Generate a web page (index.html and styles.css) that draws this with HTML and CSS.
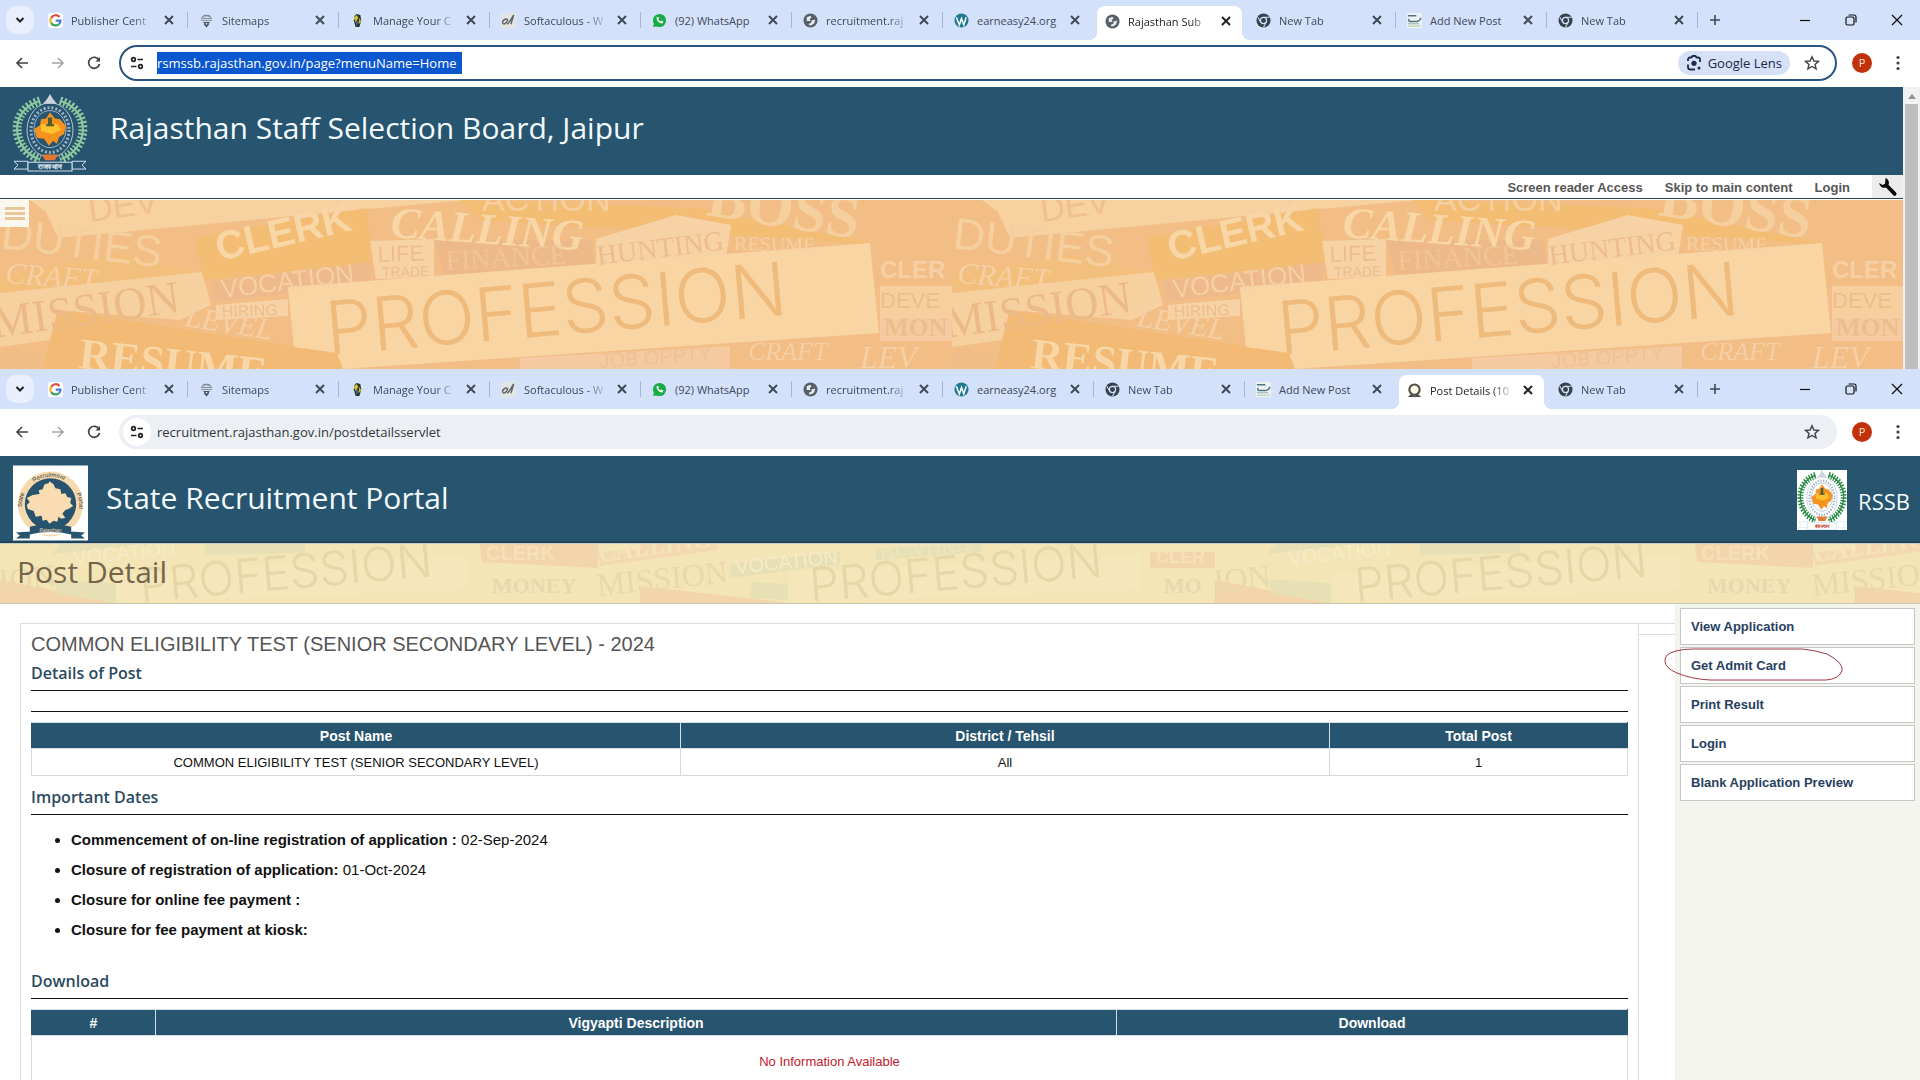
FILE: index.html
```html
<!DOCTYPE html>
<html lang="en">
<head>
  <meta charset="UTF-8" />
  <meta name="viewport" content="width=device-width, initial-scale=1" />
  <title>Rajasthan Staff Selection Board</title>
  <link rel="stylesheet" href="styles.css">
</head>
<body>
  <!-- Shared icons -->
  <svg class="defs" width="0" height="0" aria-hidden="true">
    <defs>
      <symbol id="i-x" viewBox="0 0 16 16"><path d="M4 4l8 8M12 4l-8 8" stroke="currentColor" stroke-width="2" fill="none"/></symbol>
      <symbol id="i-down" viewBox="0 0 16 16"><path d="M4.500 6l3.500 3.500L11.500 6" stroke="currentColor" stroke-width="2" fill="none"/></symbol>
      <symbol id="i-plus" viewBox="0 0 16 16"><path d="M8 3v10M3 8h10" stroke="currentColor" stroke-width="1.600" fill="none"/></symbol>
      <symbol id="i-min" viewBox="0 0 16 16"><path d="M3 8.500h10" stroke="currentColor" stroke-width="1.200" fill="none"/></symbol>
      <symbol id="i-restore" viewBox="0 0 16 16"><rect x="3" y="5" width="8" height="8" rx="1.500" fill="none" stroke="currentColor" stroke-width="1.200"/><path d="M5.500 3h5.500a2 2 0 0 1 2 2v5.500" fill="none" stroke="currentColor" stroke-width="1.200"/></symbol>
      <symbol id="i-close" viewBox="0 0 16 16"><path d="M3 3l10 10M13 3L3 13" stroke="currentColor" stroke-width="1.300" fill="none"/></symbol>
      <symbol id="i-back" viewBox="0 0 16 16"><path d="M14 8H3M8 3L3 8l5 5" stroke="currentColor" stroke-width="1.600" fill="none"/></symbol>
      <symbol id="i-fwd" viewBox="0 0 16 16"><path d="M2 8h11M8 3l5 5-5 5" stroke="currentColor" stroke-width="1.600" fill="none"/></symbol>
      <symbol id="i-reload" viewBox="0 0 16 16"><path d="M13 5.200A5.500 5.500 0 1 0 13.500 9" stroke="currentColor" stroke-width="1.700" fill="none"/><path d="M14 2V6.500H9.500z" fill="currentColor"/></symbol>
      <symbol id="i-site" viewBox="0 0 16 16"><g stroke="currentColor" stroke-width="1.700" fill="none"><circle cx="4.500" cy="4.500" r="1.800"/><path d="M8.500 4.500H14M2 11.500h5.500"/><circle cx="11.500" cy="11.500" r="1.800"/></g></symbol>
      <symbol id="i-star" viewBox="0 0 16 16"><path d="M8 1.800l1.900 4.200 4.600.4-3.500 3 1.100 4.500L8 11.500l-4.100 2.400L5 9.400l-3.500-3 4.600-.4z" stroke="currentColor" stroke-width="1.400" fill="none"/></symbol>
      <symbol id="i-dots" viewBox="0 0 16 16"><g fill="currentColor"><circle cx="8" cy="2.500" r="1.600"/><circle cx="8" cy="8" r="1.600"/><circle cx="8" cy="13.500" r="1.600"/></g></symbol>
      <symbol id="i-lens" viewBox="0 0 16 16"><path d="M2 6V4.500A2 2 0 0 1 4 2.500h1.500L6.500 1h3l1 1.500H12a2 2 0 0 1 2 2V7M2 9.500V12a2.500 2.500 0 0 0 2.500 2.500H9" stroke="currentColor" stroke-width="1.800" fill="none"/><circle cx="8" cy="8.300" r="2.600" fill="currentColor"/><circle cx="13" cy="13" r="1.500" fill="currentColor"/></symbol>
      <symbol id="i-wrench" viewBox="0 0 20 20"><path d="M7.500 1a5 5 0 0 1 3 6.800l7.500 7.700a1.900 1.900 0 0 1-2.700 2.700L8 10.500A5 5 0 0 1 1.200 6L4.500 8 7 6.800 7.300 4z" fill="#0a0a0a"/></symbol>

      <!-- Favicons -->
      <symbol id="f-google" viewBox="0 0 16 16"><rect width="16" height="16" rx="3" fill="#fff"/><g fill="none" stroke-width="2.400"><path d="M12.200 4.200A5.300 5.300 0 0 0 3.500 5.200" stroke="#e0483a"/><path d="M3.500 5.200a5.300 5.300 0 0 0 0 5.600" stroke="#f0b429"/><path d="M3.500 10.800a5.300 5.300 0 0 0 8 1.200" stroke="#36a456"/><path d="M11.500 12A5.300 5.300 0 0 0 13.300 8.200H8.200" stroke="#4a7fe0"/></g></symbol>
      <symbol id="f-sitemap" viewBox="0 0 16 16"><path d="M2.500 6C3 2 13 2 13.500 6zM5 4.500V2.500h6v2" fill="#d6dee6" stroke="#74808c"/><path d="M2 8h12M4 10h8" stroke="#8a96a0"/><path d="M5.500 9.500h5v3l-2.500 3-2.500-3z" fill="#3f4d5b"/><circle cx="8" cy="11.500" r="1" fill="#d3e1fb"/></symbol>
      <symbol id="f-manage" viewBox="0 0 16 16"><path d="M7 1l4 1 1 6-2 7H6L4 8l1-5z" fill="#28332d"/><path d="M4 5l3-3 2 3-3 5zM10 5l2 4-3 3z" fill="#d4bd37"/><path d="M6 8l3 1-2 5z" fill="#3d7387"/></symbol>
      <symbol id="f-soft" viewBox="0 0 16 16"><rect width="16" height="16" fill="#e3e5e2"/><path d="M1.500 10c2-5 7-4 5-1s-4 4-5 1M6.500 12c3-2 4-5 7-10-1 4-2 7-3 10" stroke="#5f6668" stroke-width="1.600" fill="none"/></symbol>
      <symbol id="f-wa" viewBox="0 0 16 16"><circle cx="8" cy="8" r="7" fill="#18ac45"/><path d="M1 15l1.500-5L6 14z" fill="#18ac45"/><path d="M5 4.500c-1 3 3.500 7.500 6.500 6.500l.5-2-2-1-1 1L6.500 7l1-1-1-2z" fill="#fff"/></symbol>
      <symbol id="f-globe" viewBox="0 0 16 16"><circle cx="8" cy="8" r="7.500" fill="#566067"/><path d="M4 4.500L8 3l1 2-2 1.500 1 2H4zM9 8l4-1-1 4-3 2H6l1-2 2-.5z" fill="#e6ebee"/></symbol>
      <symbol id="f-wp" viewBox="0 0 16 16"><circle cx="8" cy="8" r="7.500" fill="#1f7a90"/><path d="M2.500 4.500l3.200 8.300L8 6l2.500 6.800L13 4.500" stroke="#fff" stroke-width="1.600" fill="none"/></symbol>
      <symbol id="f-chrome" viewBox="0 0 16 16"><circle cx="8" cy="8" r="7.500" fill="#36424c"/><circle cx="8" cy="8" r="3.300" fill="none" stroke="#d3e1fb" stroke-width="1.300"/><path d="M8 4.500h6.500M5 10L2 4.500M10.800 10L8 15.300" stroke="#d3e1fb" stroke-width="1.100"/></symbol>
      <symbol id="f-addpost" viewBox="0 0 16 16"><rect width="16" height="16" fill="#eef3f2"/><path d="M1 3h9M2 9h9q3-1 4-4M2 6v3" stroke="#4c7380" stroke-width="1.500" fill="none"/><path d="M1 11.500h12" stroke="#8fa9ae"/><path d="M1 14h14" stroke="#a7c8a7"/></symbol>
      <symbol id="f-post" viewBox="0 0 16 16"><circle cx="8" cy="7" r="5.500" fill="#fffbe8" stroke="#4c5044" stroke-width="2.200"/><path d="M1 15l3-3 4 1.500 4-1.500 3 3z" fill="#4c5044"/></symbol>

      <!-- Board emblem -->
      <symbol id="emblem" viewBox="0 0 76 80" preserveAspectRatio="none">
        <g fill="none" stroke="currentColor">
          <path d="M28 7C-5 17 0 58 28 67M48 7c33 10 28 51 0 60" stroke-width="9" stroke-dasharray="2 2"/>
          <path d="M28 7C-5 17 0 58 28 67M48 7c33 10 28 51 0 60" stroke-width="2"/>
        </g>
        <ellipse cx="38" cy="37" rx="23" ry="28" fill="var(--ring)" stroke="#b9c9d9" stroke-width="1"/>
        <ellipse cx="38" cy="37" rx="19" ry="23" fill="none" stroke="#9fb2c6" stroke-width="3" stroke-dasharray="2 2"/>
        <ellipse cx="38" cy="36" rx="16" ry="19" fill="var(--disc)" stroke="#9fb2c6"/>
        <path d="M38 19l5 6 5 1 6 7-2 8-5 3-2 7-4-3-4 5-5-7-7-1-3-9 6-4 1-6 5-1z" fill="#f6921e"/>
        <path d="M29 31h17l3 6-9 4-11-3z" fill="#fbc22d"/>
        <path d="M36 24h4v7h-4zM34 31h8v2h-8z" fill="#4f5c33"/>
        <path d="M38 0l3 5 4 5H31l4-5z" fill="#cdd3dc"/>
        <path d="M30 62h16l-3 6H33z" fill="#e07836"/>
        <path d="M2 69h14v8H2l4-4zM74 69H60v8h14l-4-4z" fill="var(--disc)" stroke="#d3e2f4"/>
        <rect x="16" y="70" width="44" height="9" fill="var(--disc)" stroke="#d3e2f4"/>
        <text x="38" y="77" text-anchor="middle" font-size="7" font-weight="bold" fill="var(--ribbon)">राजस्थान</text>
      </symbol>

      <!-- Word collage, large -->
      <pattern id="words" width="952" height="169" patternUnits="userSpaceOnUse">
        <rect width="952" height="169" fill="#f2be86"/>
        <path d="M30 0H465L58 38 46 12z" fill="#f7d1a0"/>
        <path d="M0 75l120-20 80 17-200 34z" fill="#f3bf7c"/>
        <path d="M196 37L367 8l6 55-171 17zM480 20L880 45 700 8 460 0z" fill="#f3bd74"/>
        <path d="M0 93l202-21 9 33-31 15-122-10-8 30-50 7z" fill="#f7d0a0"/>
        <path d="M58 110l279 43 6 16H43z" fill="#f2ba74"/>
        <path d="M211 82l160-20v22l-158 18z" fill="#efba8b"/>
        <path d="M216 105l72-6v17l-72 4zM370 41l64-2v38l-58 2zM596 39l80-24 55 10-5 33-130 16z" fill="#f7d2a5"/>
        <path d="M434 39l158 2 4 34-152 4z" fill="#eeb989"/>
        <path d="M288 87L870 43l9 90-536 36-6-16-43-6z" fill="#f8d5a3"/>
        <path d="M880 86h72v32h-72z" fill="#f7cf9e"/>
        <path d="M880 118h72v23h-72zM520 158l210-12v23H520z" fill="#f5caa0"/>
        <g font-family="Liberation Sans">
          <text transform="translate(90 22) rotate(-8)" font-size="34" fill="#f0c08e">DEV</text>
          <text transform="translate(0 48) rotate(7)" font-size="44" fill="#f6cf9f">DUTIES</text>
          <text transform="translate(219 61) rotate(-13)" font-size="40" font-weight="bold" fill="#f8d6a5">CLERK</text>
          <text transform="translate(222 98) rotate(-7)" font-size="26" fill="#f6d0a4">VOCATION</text>
          <text x="482" y="11" font-size="34" fill="#f6cf9f">ACTION</text>
          <text transform="translate(222 117) rotate(-2)" font-size="16" fill="#edbd8c">HIRING</text>
          <text transform="translate(378 62) rotate(-2)" font-size="22" fill="#edbd8c">LIFE</text>
          <text transform="translate(382 77) rotate(-1)" font-size="14" fill="#edbd8c">TRADE</text>
          <text x="880" y="78" font-size="24" font-weight="bold" fill="#f6d0a4">CLER</text>
          <text x="880" y="108" font-size="22" fill="#edbd8c">DEVE</text>
          <text x="0" y="166" font-size="20" fill="#edbd8c">RAD</text>
          <text transform="translate(600 168) rotate(-4)" font-size="20" fill="#efc294">JOB OPPTY</text>
        </g>
        <g font-family="Liberation Serif">
          <text transform="translate(390 37) rotate(4)" font-size="44" font-style="italic" font-weight="bold" fill="#f8d6a5">CALLING</text>
          <text transform="translate(705 15) rotate(9)" font-size="60" font-weight="bold" fill="#f6cf9f">BOSS</text>
          <text transform="translate(598 65) rotate(-7)" font-size="28" fill="#edbd8c">HUNTING</text>
          <text transform="translate(734 50) rotate(1)" font-size="20" fill="#f6d0a4">RESUME</text>
          <text transform="translate(446 70) rotate(-3)" font-size="28" fill="#f1c496">FINANCE</text>
          <text transform="translate(5 83) rotate(4)" font-size="30" font-style="italic" fill="#f6d0a4">CRAFT</text>
          <text transform="translate(-6 138) rotate(-8)" font-size="46" fill="#ecba86">MISSION</text>
          <text transform="translate(184 126) rotate(9)" font-size="30" font-style="italic" fill="#f6d0a4">LEVEL</text>
          <text transform="translate(78 168) rotate(6)" font-size="44" font-weight="bold" fill="#f8d6a5">RESUME</text>
          <text x="884" y="136" font-size="26" font-weight="bold" fill="#edbd8c">MON</text>
          <text x="748" y="160" font-size="26" font-style="italic" fill="#f6d0a4">CRAFT</text>
          <text x="860" y="168" font-size="32" font-style="italic" fill="#f6d0a4">LEV</text>
        </g>
        <text transform="translate(328 155) rotate(-5)" font-family="Inter" font-weight="300" font-size="74" fill="#efbb7c">PROFESSION</text>
      </pattern>

      <!-- Word collage, page title strip -->
      <pattern id="words-soft" width="1215" height="59" patternUnits="userSpaceOnUse">
        <rect width="1215" height="59" fill="#f4e5b6"/>
        <path d="M0 36l120 23H0zM480 0h118v24l-116-6zM640 42l150 17H640zM1150 8h65v16h-65z" fill="#f3d5ac"/>
        <path d="M52 10l110-10H60zM50 35l66 4v20L60 50zM205 0h100v9l-100 2zM730 20l110-12v12l-110 14zM876 4l106-4v8l-106 8zM752 38l36 2v16l-38-2z" fill="#e8e0b5"/>
        <path d="M598 8l120-8v6l-118 16zM640 0h72l-70 10z" fill="#f4d9b0"/>
        <path d="M116 30l350-20v36l-350 13zM790 28l350-18v36l-350 13z" fill="#f5e7b9"/>
        <g font-family="Liberation Sans">
          <text transform="translate(74 21) rotate(-6)" font-size="20" fill="#f6ebc6">VOCATION</text>
          <text transform="translate(736 30) rotate(-6)" font-size="20" fill="#f6ebc6">VOCATION</text>
          <text x="486" y="16" font-size="20" font-weight="bold" fill="#f6e0b8">CLERK</text>
          <text x="1156" y="19" font-size="18" font-weight="bold" fill="#f6e0b8">CLER</text>
        </g>
        <g font-family="Inter" font-weight="300" font-size="47" fill="#e6d7a9">
          <text transform="translate(141 58) rotate(-5)">PROFESSION</text>
          <text transform="translate(811 58) rotate(-5)">PROFESSION</text>
        </g>
        <g font-family="Liberation Serif">
          <text transform="translate(600 18) rotate(-8)" font-size="26" font-style="italic" font-weight="bold" fill="#f6e4bc">CALLING</text>
          <text x="492" y="49" font-size="22" font-weight="bold" fill="#e6d9ad">MONEY</text>
          <text transform="translate(598 52) rotate(-6)" font-size="32" fill="#e9d8aa">MISSION</text>
          <text transform="translate(880 14) rotate(-3)" font-size="20" fill="#efe5bd">HUNTING</text>
          <text transform="translate(0 48) rotate(-6)" font-size="32" fill="#e9d8aa">ION</text>
          <text x="1164" y="49" font-size="22" font-weight="bold" fill="#e6d9ad">MO</text>
        </g>
      </pattern>
    </defs>
  </svg>

  <!-- Recruitment board home -->
  <section class="window window-top">
    <div class="tabs">
      <button class="tab-search" aria-label="Search tabs"><svg><use href="#i-down"/></svg></button>
      <div class="tab"><svg><use href="#f-google"/></svg><span>Publisher Cent</span><button aria-label="Close tab"><svg><use href="#i-x"/></svg></button></div>
      <div class="tab"><svg><use href="#f-sitemap"/></svg><span>Sitemaps</span><button aria-label="Close tab"><svg><use href="#i-x"/></svg></button></div>
      <div class="tab"><svg><use href="#f-manage"/></svg><span>Manage Your C</span><button aria-label="Close tab"><svg><use href="#i-x"/></svg></button></div>
      <div class="tab"><svg><use href="#f-soft"/></svg><span>Softaculous - W</span><button aria-label="Close tab"><svg><use href="#i-x"/></svg></button></div>
      <div class="tab"><svg><use href="#f-wa"/></svg><span class="fits">(92) WhatsApp</span><button aria-label="Close tab"><svg><use href="#i-x"/></svg></button></div>
      <div class="tab"><svg><use href="#f-globe"/></svg><span>recruitment.raj</span><button aria-label="Close tab"><svg><use href="#i-x"/></svg></button></div>
      <div class="tab before-active"><svg><use href="#f-wp"/></svg><span class="fits">earneasy24.org</span><button aria-label="Close tab"><svg><use href="#i-x"/></svg></button></div>
      <div class="tab active"><svg><use href="#f-globe"/></svg><span>Rajasthan Sub</span><button aria-label="Close tab"><svg><use href="#i-x"/></svg></button></div>
      <div class="tab"><svg><use href="#f-chrome"/></svg><span>New Tab</span><button aria-label="Close tab"><svg><use href="#i-x"/></svg></button></div>
      <div class="tab"><svg><use href="#f-addpost"/></svg><span class="fits">Add New Post</span><button aria-label="Close tab"><svg><use href="#i-x"/></svg></button></div>
      <div class="tab"><svg><use href="#f-chrome"/></svg><span>New Tab</span><button aria-label="Close tab"><svg><use href="#i-x"/></svg></button></div>
      <button class="new-tab" aria-label="New tab"><svg><use href="#i-plus"/></svg></button>
      <div class="controls">
        <button aria-label="Minimize"><svg><use href="#i-min"/></svg></button>
        <button aria-label="Restore"><svg><use href="#i-restore"/></svg></button>
        <button aria-label="Close"><svg><use href="#i-close"/></svg></button>
      </div>
    </div>
    <div class="toolbar">
      <button aria-label="Back"><svg><use href="#i-back"/></svg></button>
      <button class="off" aria-label="Forward"><svg><use href="#i-fwd"/></svg></button>
      <button aria-label="Reload"><svg><use href="#i-reload"/></svg></button>
      <div class="omnibox focused">
        <button class="site" aria-label="Site information"><svg><use href="#i-site"/></svg></button>
        <input class="url selected" type="text" aria-label="Address" value="rsmssb.rajasthan.gov.in/page?menuName=Home">
        <button class="lens"><svg><use href="#i-lens"/></svg>Google Lens</button>
        <button class="star" aria-label="Bookmark"><svg><use href="#i-star"/></svg></button>
      </div>
      <button class="avatar">P</button>
      <button aria-label="Menu"><svg><use href="#i-dots"/></svg></button>
    </div>

    <div class="view">
      <div class="site-page">
        <header class="site-header">
          <svg class="board-logo" role="img" aria-label="Board emblem"><use href="#emblem"/></svg>
          <h1>Rajasthan Staff Selection Board, Jaipur</h1>
        </header>
        <nav class="access">
          <a href="#">Screen reader Access</a>
          <a href="#">Skip to main content</a>
          <a href="#">Login</a>
          <button class="tools" aria-label="Tools"><svg><use href="#i-wrench"/></svg></button>
        </nav>
        <div class="hero">
          <svg class="hero-art" aria-hidden="true"><rect width="100%" height="100%" fill="url(#words)"/></svg>
          <button class="menu" aria-label="Menu"><i></i><i></i><i></i></button>
        </div>
      </div>
      <div class="scrollbar"><div class="arrow"></div><div class="thumb"></div></div>
    </div>
  </section>

  <!-- Recruitment portal -->
  <section class="window window-bottom">
    <div class="tabs">
      <button class="tab-search" aria-label="Search tabs"><svg><use href="#i-down"/></svg></button>
      <div class="tab"><svg><use href="#f-google"/></svg><span>Publisher Cent</span><button aria-label="Close tab"><svg><use href="#i-x"/></svg></button></div>
      <div class="tab"><svg><use href="#f-sitemap"/></svg><span>Sitemaps</span><button aria-label="Close tab"><svg><use href="#i-x"/></svg></button></div>
      <div class="tab"><svg><use href="#f-manage"/></svg><span>Manage Your C</span><button aria-label="Close tab"><svg><use href="#i-x"/></svg></button></div>
      <div class="tab"><svg><use href="#f-soft"/></svg><span>Softaculous - W</span><button aria-label="Close tab"><svg><use href="#i-x"/></svg></button></div>
      <div class="tab"><svg><use href="#f-wa"/></svg><span class="fits">(92) WhatsApp</span><button aria-label="Close tab"><svg><use href="#i-x"/></svg></button></div>
      <div class="tab"><svg><use href="#f-globe"/></svg><span>recruitment.raj</span><button aria-label="Close tab"><svg><use href="#i-x"/></svg></button></div>
      <div class="tab"><svg><use href="#f-wp"/></svg><span class="fits">earneasy24.org</span><button aria-label="Close tab"><svg><use href="#i-x"/></svg></button></div>
      <div class="tab"><svg><use href="#f-chrome"/></svg><span>New Tab</span><button aria-label="Close tab"><svg><use href="#i-x"/></svg></button></div>
      <div class="tab before-active"><svg><use href="#f-addpost"/></svg><span class="fits">Add New Post</span><button aria-label="Close tab"><svg><use href="#i-x"/></svg></button></div>
      <div class="tab active"><svg><use href="#f-post"/></svg><span>Post Details (10</span><button aria-label="Close tab"><svg><use href="#i-x"/></svg></button></div>
      <div class="tab"><svg><use href="#f-chrome"/></svg><span>New Tab</span><button aria-label="Close tab"><svg><use href="#i-x"/></svg></button></div>
      <button class="new-tab" aria-label="New tab"><svg><use href="#i-plus"/></svg></button>
      <div class="controls">
        <button aria-label="Minimize"><svg><use href="#i-min"/></svg></button>
        <button aria-label="Restore"><svg><use href="#i-restore"/></svg></button>
        <button aria-label="Close"><svg><use href="#i-close"/></svg></button>
      </div>
    </div>
    <div class="toolbar">
      <button aria-label="Back"><svg><use href="#i-back"/></svg></button>
      <button class="off" aria-label="Forward"><svg><use href="#i-fwd"/></svg></button>
      <button aria-label="Reload"><svg><use href="#i-reload"/></svg></button>
      <div class="omnibox">
        <button class="site" aria-label="Site information"><svg><use href="#i-site"/></svg></button>
        <input class="url" type="text" aria-label="Address" value="recruitment.rajasthan.gov.in/postdetailsservlet">
        <button class="star" aria-label="Bookmark"><svg><use href="#i-star"/></svg></button>
      </div>
      <button class="avatar">P</button>
      <button aria-label="Menu"><svg><use href="#i-dots"/></svg></button>
    </div>

    <header class="portal-header">
      <svg class="portal-logo" viewBox="0 0 76 76" role="img" aria-label="State Recruitment Portal">
        <rect width="76" height="76" fill="#fff"/>
        <circle cx="38" cy="39" r="33" fill="#f7d9ae"/>
        <circle cx="38" cy="39" r="26" fill="#27536d"/>
        <path d="M37 16l4 3 2 4 5 1 1 5 4-1 2 4 4 1-1 5 3 3-5 3-3 1-3 4 3 4-4 1-3-2-1 5-4-1-4 3-3-4-4 1-1-5-6 1-2-6-6-2-1-4 3-3-3-4 6-3 7-1-1-4 4-1 2-5 4-1z" fill="#f9dcb1"/>
        <path d="M9 60q29 10 58 0l-2 10H11z" fill="#fff"/>
        <path d="M17 62q21-6 42 0v8q-21-5-42 0zM3 68l14-1v7H3l4-3zM73 68l-14-1v7h14l-4-3z" fill="#27536d"/>
        <path id="arc" d="M10 48a29 29 0 1 1 56 0" fill="none"/>
        <g font-size="6" font-family="Liberation Sans" fill="#2b3943">
          <text><textPath href="#arc" startOffset="6">State</textPath></text>
          <text><textPath href="#arc" startOffset="35">Recruitment</textPath></text>
          <text><textPath href="#arc" startOffset="86">Portal</textPath></text>
        </g>
        <text x="38" y="67" text-anchor="middle" font-size="5" font-family="Liberation Sans" fill="#f7d9ae">Rajasthan</text>
      </svg>
      <h1>State Recruitment Portal</h1>
      <svg class="rssb-logo" role="img" aria-label="RSSB emblem"><use href="#emblem"/></svg>
      <span class="rssb">RSSB</span>
    </header>

    <div class="title-strip">
      <svg class="strip-art" aria-hidden="true"><rect width="100%" height="100%" fill="url(#words-soft)"/></svg>
      <h2>Post Detail</h2>
    </div>

    <div class="columns">
      <main class="panel">
        <h3 class="post-title">COMMON ELIGIBILITY TEST (SENIOR SECONDARY LEVEL) - 2024</h3>
        <h4>Details of Post</h4>
        <hr>
        <table class="posts">
          <thead><tr><th>Post Name</th><th>District / Tehsil</th><th>Total Post</th></tr></thead>
          <tbody><tr><td>COMMON ELIGIBILITY TEST (SENIOR SECONDARY LEVEL)</td><td>All</td><td>1</td></tr></tbody>
        </table>
        <h4>Important Dates</h4>
        <ul class="dates">
          <li><b>Commencement of on-line registration of application :</b> 02-Sep-2024</li>
          <li><b>Closure of registration of application:</b> 01-Oct-2024</li>
          <li><b>Closure for online fee payment :</b></li>
          <li><b>Closure for fee payment at kiosk:</b></li>
        </ul>
        <h4>Download</h4>
        <table class="files">
          <thead><tr><th>#</th><th>Vigyapti Description</th><th>Download</th></tr></thead>
          <tbody><tr><td colspan="3" class="empty">No Information Available</td></tr></tbody>
        </table>
      </main>
      <div class="gutter"></div>
      <aside class="side">
        <a href="#">View Application</a>
        <a href="#" class="marked">Get Admit Card
          <svg class="mark" viewBox="0 0 180 34" aria-hidden="true"><path d="M12 3Q0 6 1 13q0 7 12 12 14 6 33 7h116q13-1 16-9 2-8-15-17Q150 2 138 1H30Q18 1 12 3z" fill="none" stroke="#a03a48"/></svg>
        </a>
        <a href="#">Print Result</a>
        <a href="#">Login</a>
        <a href="#">Blank Application Preview</a>
      </aside>
    </div>
  </section>
</body>
</html>
```
FILE: styles.css
```css
/* Basic Reset */
* {
  margin: 0;
  padding: 0;
  box-sizing: border-box;
}

html, body {
  height: 100%;
}

body {
  display: flex;
  flex-direction: column;
  overflow: hidden;
  background: #fff;
  font-family: "Liberation Sans", Arial, sans-serif;
  font-size: 14px;
  color: #111;
}

button {
  display: flex;
  align-items: center;
  justify-content: center;
  border: 0;
  background: none;
  color: inherit;
  font: inherit;
}

a {
  color: inherit;
  text-decoration: none;
}

svg {
  display: block;
  flex: none;
}

.defs {
  position: absolute;
}

.window {
  display: flex;
  flex-direction: column;
  flex: none;
}

.window-bottom {
  flex: 1;
  min-height: 0;
}

/* Tab strip */
.tabs {
  display: flex;
  align-items: center;
  height: 40px;
  padding-left: 6px;
  background: #d3e1fb;
  font-family: "Open Sans", "Noto Sans", sans-serif;
  font-size: 11px;
  color: #3f4a59;
}

.tab-search {
  width: 28px;
  height: 28px;
  margin-right: 3px;
  border-radius: 10px;
  background: #e9effd;
  color: #222;
}

.tab-search svg, .new-tab svg, .controls svg, .toolbar svg {
  width: 16px;
  height: 16px;
}

.tab {
  position: relative;
  display: flex;
  align-items: center;
  flex: 0 1 151px;
  min-width: 0;
  height: 34px;
  padding: 0 11px;
}

.tab > svg {
  width: 15px;
  height: 15px;
}

.tab span {
  flex: 1;
  margin: 0 1px 0 8px;
  overflow: hidden;
  white-space: nowrap;
  -webkit-mask-image: linear-gradient(to right, #000 70%, transparent 95%);
  mask-image: linear-gradient(to right, #000 70%, transparent 95%);
}

.tab .fits {
  -webkit-mask-image: none;
  mask-image: none;
}

.tab button svg {
  width: 16px;
  height: 16px;
}

.tab:not(.active):not(.before-active)::after {
  content: "";
  position: absolute;
  right: 0;
  top: 9px;
  width: 1px;
  height: 16px;
  background: #a8b6d0;
}

.tab.active {
  align-self: flex-end;
  flex-basis: 145px;
  margin: 0 3px;
  padding: 0 8px 4px;
  background: #fff;
  border-radius: 8px 8px 0 0;
  color: #222;
}

/* Flared feet of the open tab */
.tab.active::before, .tab.active::after {
  content: "";
  position: absolute;
  bottom: 0;
  width: 8px;
  height: 8px;
}

.tab.active::before {
  left: -8px;
  background: radial-gradient(circle at 0 0, transparent 8px, #fff 8px);
}

.tab.active::after {
  right: -8px;
  background: radial-gradient(circle at 100% 0, transparent 8px, #fff 8px);
}

.new-tab {
  width: 34px;
  height: 28px;
}

.controls {
  display: flex;
  margin-left: auto;
  color: #111;
}

.controls button {
  width: 46px;
  height: 40px;
}

/* Toolbar */
.toolbar {
  display: flex;
  align-items: center;
  height: 47px;
  padding: 0 4px 2px;
  background: #fff;
  font-family: "Open Sans", "Noto Sans", sans-serif;
  font-size: 13px;
  color: #3f4247;
}

.toolbar > button {
  width: 36px;
  height: 36px;
}

.toolbar > .off {
  color: #a3a6aa;
}

.omnibox {
  display: flex;
  align-items: center;
  flex: 1;
  height: 34px;
  margin: 0 15px 0 7px;
  padding: 0 17px 0 4px;
  border-radius: 18px;
  background: #eceff3;
}

.omnibox.focused {
  height: 36px;
  padding: 0 15px 0 2px;
  border: 2px solid #2b5580;
  background: #fff;
}

.site {
  width: 28px;
  height: 28px;
  margin-right: 6px;
  border-radius: 50%;
  background: #fff;
  color: #222;
}

.url {
  flex: 1;
  min-width: 0;
  height: 22px;
  border: 0;
  outline: 0;
  background: none;
  font: inherit;
  color: #33373c;
}

.url.selected {
  flex: 0 1 305px;
  background: #0b57d0;
  color: #fff;
}

.lens {
  gap: 6px;
  height: 24px;
  margin-left: auto;
  padding: 0 8px;
  border-radius: 12px;
  background: #d6e0f7;
  color: #1b2b4a;
  font-weight: 500;
}

.star {
  margin-left: 14px;
}

.toolbar > .avatar {
  width: 20px;
  height: 20px;
  margin-right: 8px;
  border-radius: 50%;
  background: #c0310c;
  color: #fbe3d6;
  font-size: 11px;
}

/* Board home page */
.view {
  display: flex;
}

.site-page {
  flex: 1;
  min-width: 0;
}

.site-header, .portal-header {
  display: flex;
  align-items: center;
  background: #27546e;
  color: #f2fafd;
}

h1, .rssb, h2 {
  font-family: "Open Sans", "Noto Sans", sans-serif;
  font-size: 30px;
  font-weight: 400;
  line-height: 36px;
}

.site-header {
  height: 88px;
  padding: 4px 0 0 12px;
  gap: 22px;
}

.site-header h1 {
  padding-bottom: 10px;
}

.board-logo {
  --ring: #27546e;
  --disc: #27546e;
  --ribbon: #e8f2fb;
  width: 76px;
  height: 78px;
  color: #8fc9a0;
}

.access {
  display: flex;
  align-items: center;
  justify-content: flex-end;
  gap: 22px;
  height: 24px;
  border-bottom: 1px solid #33414d;
  color: #565656;
  font-size: 13px;
  font-weight: bold;
}

.access a {
  padding-top: 2px;
}

.tools {
  width: 31px;
  height: 23px;
  background: #ececec;
}

.tools svg {
  width: 20px;
  height: 20px;
}

.hero {
  position: relative;
  height: 170px;
  border-top: 1px solid #fff;
}

.hero-art {
  width: 100%;
  height: 169px;
}

.menu {
  position: absolute;
  left: 0;
  top: 0;
  flex-direction: column;
  gap: 2px;
  width: 29px;
  height: 27px;
  background: #fbf6ee;
}

.menu i {
  width: 20px;
  height: 3px;
  background: #e8c79b;
}

.scrollbar {
  display: flex;
  flex-direction: column;
  align-items: center;
  width: 17px;
  background: #f1f1f1;
}

.arrow {
  margin: 7px 0 5px;
  border: 4px solid transparent;
  border-top-width: 0;
  border-bottom: 5px solid #8f9296;
}

.thumb {
  flex: 1;
  width: 13px;
  background: #bebebe;
}

/* Portal page */
.portal-header {
  height: 87px;
  padding: 0 10px 0 13px;
  border-bottom: 2px solid #20435a;
}

.portal-header h1 {
  padding-bottom: 2px;
}

.portal-logo {
  align-self: flex-end;
  width: 75px;
  height: 76px;
  margin-right: 18px;
}

.rssb-logo {
  --ring: #fff;
  --disc: #fff;
  --ribbon: #c0392b;
  width: 50px;
  height: 60px;
  margin: 2px 11px 0 auto;
  background: #fff;
  color: #2b8a45;
}

.rssb {
  padding-top: 4px;
  font-size: 22px;
}

.title-strip {
  position: relative;
  height: 61px;
  border-top: 1px solid #c3cbc8;
  border-bottom: 1px solid #c9c5b4;
}

.strip-art {
  width: 100%;
  height: 59px;
}

.title-strip h2 {
  position: absolute;
  left: 17px;
  top: 10px;
  color: #74654a;
}

.columns {
  display: flex;
  flex: 1;
  min-height: 0;
}

.panel {
  flex: 1;
  min-width: 0;
  margin: 19px 0 0 20px;
  padding: 8px 10px 0;
  border: 1px solid #dcdcdc;
  border-bottom: 0;
}

.post-title {
  font-size: 20px;
  font-weight: 400;
  line-height: 24px;
  color: #555;
}

h4 {
  border-bottom: 1px solid #111;
  font-family: "Open Sans", "Noto Sans", sans-serif;
  font-size: 16px;
  font-weight: 600;
  line-height: 34px;
  color: #2b4a5e;
}

hr {
  margin-top: 20px;
  border: 0;
  border-top: 1px solid #111;
}

table {
  width: 100%;
  margin-top: 10px;
  border-collapse: collapse;
  table-layout: fixed;
  text-align: center;
}

th {
  height: 26px;
  border: 1px solid #d5dfe5;
  background: #27546e;
  color: #fff;
}

th:first-child {
  border-left-color: #27546e;
}

th:last-child {
  border-right-color: #27546e;
}

td {
  height: 27px;
  border: 1px solid #d5d8db;
  font-size: 13px;
}

.posts {
  margin-bottom: 4px;
}

.posts th:nth-child(-n+2) {
  width: 649px;
}

.files th:nth-child(1) {
  width: 124px;
}

.files th:nth-child(2) {
  width: 961px;
}

.files .empty {
  height: 52px;
  color: #c0202c;
}

.dates {
  margin: 10px 0 19px;
  padding-left: 40px;
  font-size: 15px;
  line-height: 30px;
}

/* Strip between the panel and the side menu */
.gutter {
  width: 36px;
  height: 12px;
  margin-top: 19px;
  border-top: 1px solid #dcdcdc;
  border-bottom: 1px solid #dcdcdc;
}

.side {
  display: flex;
  flex-direction: column;
  gap: 2px;
  width: 245px;
  padding: 4px 5px;
  background: #f4f4ef;
}

.side a {
  position: relative;
  height: 37px;
  padding-left: 10px;
  border: 1px solid #c6c6c6;
  background: #fff;
  font-size: 13px;
  font-weight: bold;
  line-height: 35px;
  color: #28405f;
}

/* Hand drawn ring round the admit card link */
.mark {
  position: absolute;
  left: -17px;
  top: 0;
  z-index: 1;
  width: 180px;
  height: 34px;
}
```
